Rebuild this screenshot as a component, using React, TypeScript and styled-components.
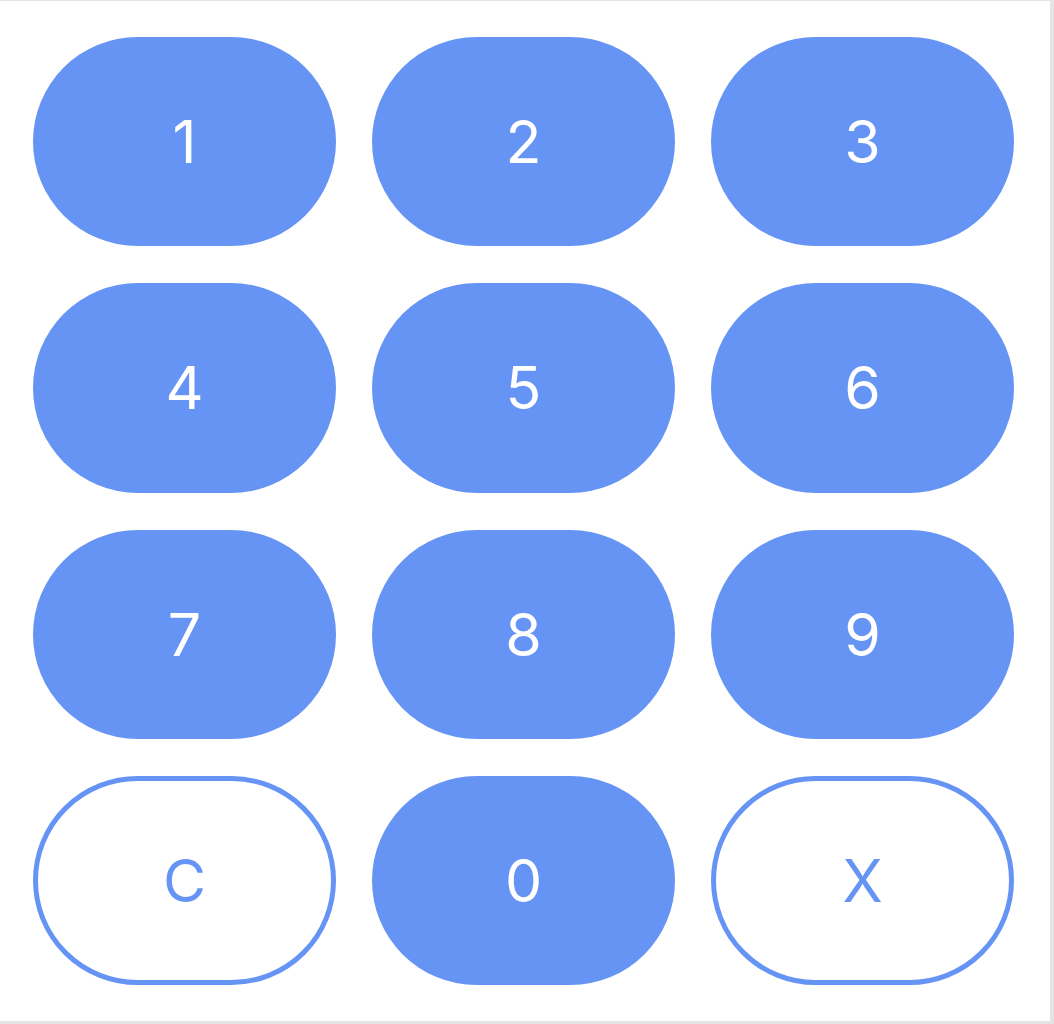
import React from "react";
import styled, { createGlobalStyle } from "styled-components";

const Global = createGlobalStyle`
  html, body { margin: 0; padding: 0; background: #e4e4e4; }
  body { font-family: Inter, "Helvetica Neue", Arial, sans-serif; }
`;

const Panel = styled.div`
  box-sizing: border-box;
  width: 1050px;
  height: 1020px;
  margin-top: 1px;
  background: #ffffff;
  padding: 36px 36px 36px 33px;
  display: grid;
  grid-template-columns: repeat(3, 303px);
  grid-template-rows: repeat(4, 1fr);
  column-gap: 36px;
  row-gap: 37px;
`;

const Key = styled.button<{ $outline?: boolean }>`
  box-sizing: border-box;
  border-radius: 105px;
  border: ${(p) => (p.$outline ? "5px solid #6694f5" : "none")};
  background: ${(p) => (p.$outline ? "#ffffff" : "#6694f5")};
  color: ${(p) => (p.$outline ? "#6694f5" : "#ffffff")};
  font-family: Inter, "Helvetica Neue", Arial, sans-serif;
  font-size: 59px;
  font-weight: 400;
  display: flex;
  align-items: center;
  justify-content: center;
  padding: 0;
  cursor: pointer;
  outline: none;
`;

const keys: { label: string; outline?: boolean }[] = [
  { label: "1" },
  { label: "2" },
  { label: "3" },
  { label: "4" },
  { label: "5" },
  { label: "6" },
  { label: "7" },
  { label: "8" },
  { label: "9" },
  { label: "C", outline: true },
  { label: "0" },
  { label: "X", outline: true },
];

export default function App() {
  return (
    <>
      <Global />
      <Panel>
        {keys.map((k) => (
          <Key key={k.label} $outline={k.outline}>
            {k.label}
          </Key>
        ))}
      </Panel>
    </>
  );
}
